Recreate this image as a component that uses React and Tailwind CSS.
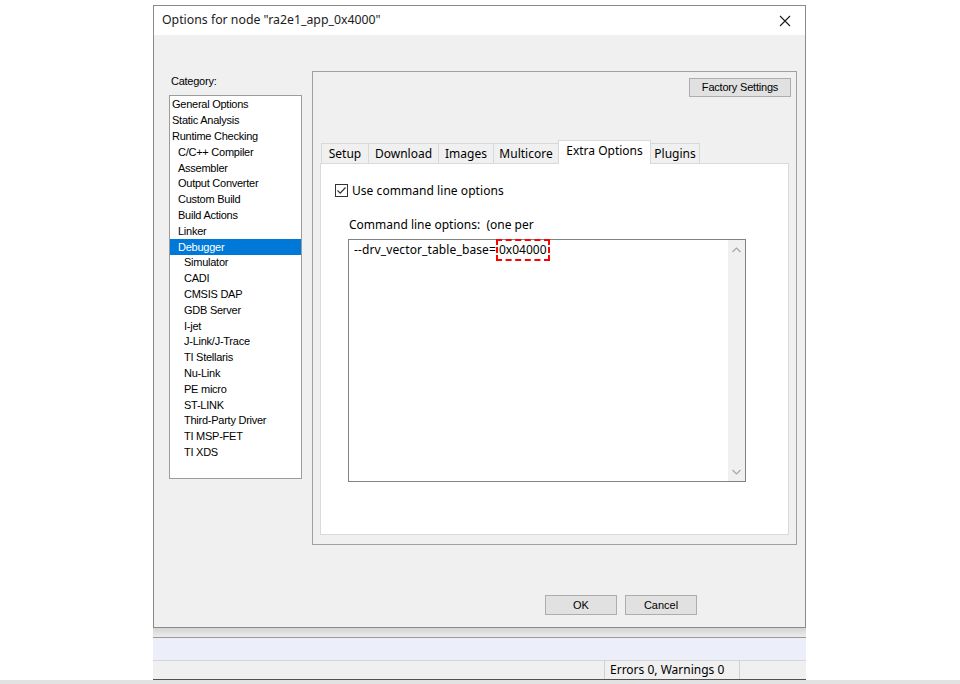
import React from "react";

const categories = [
  ["General Options", 0],
  ["Static Analysis", 0],
  ["Runtime Checking", 0],
  ["C/C++ Compiler", 1],
  ["Assembler", 1],
  ["Output Converter", 1],
  ["Custom Build", 1],
  ["Build Actions", 1],
  ["Linker", 1],
  ["Debugger", 1, true],
  ["Simulator", 2],
  ["CADI", 2],
  ["CMSIS DAP", 2],
  ["GDB Server", 2],
  ["I-jet", 2],
  ["J-Link/J-Trace", 2],
  ["TI Stellaris", 2],
  ["Nu-Link", 2],
  ["PE micro", 2],
  ["ST-LINK", 2],
  ["Third-Party Driver", 2],
  ["TI MSP-FET", 2],
  ["TI XDS", 2],
];

const tabs = [
  ["Setup", "w-[48px]"],
  ["Download", "w-[70px]"],
  ["Images", "w-[55px]"],
  ["Multicore", "w-[64px]"],
  ["Extra Options", "w-[93px]", true],
  ["Plugins", "w-[49px]"],
];

const ui = { fontFamily: '"Noto Sans", "Open Sans", sans-serif' };
const classic = { fontFamily: '"Liberation Sans", Arial, sans-serif' };

function CategoryItem({ label, level, selected }) {
  const indent = level === 0 ? "pl-[2px]" : level === 1 ? "pl-[8px]" : "pl-[14px]";
  return (
    <div
      className={`h-[15.8px] flex items-center text-[11px] tracking-[-0.25px] leading-none whitespace-nowrap ${indent} ${
        selected ? "bg-[#0078d7] text-white" : "text-black"
      }`}
    >
      {label}
    </div>
  );
}

function Chevron({ up }) {
  return (
    <svg width="9" height="6" viewBox="0 0 9 6" className="block">
      <path
        d={up ? "M0.5 5 L4.5 1 L8.5 5" : "M0.5 1 L4.5 5 L8.5 1"}
        fill="none"
        stroke="#a6a6a6"
        strokeWidth="1.2"
      />
    </svg>
  );
}

export default function App() {
  return (
    <div className="w-[960px] h-[684px] bg-white overflow-hidden flex flex-col">
      <div className="ml-[153px] mt-[5px] w-[653px] flex flex-col">
        {/* dialog window */}
        <div className="border border-[#8a8a8a] bg-white flex flex-col">
          <div className="h-[29px] flex items-center justify-between pl-[8px] pr-[10px]">
            <span className="text-[12.3px] text-[#1a1a1a]" style={ui}>
              Options for node "ra2e1_app_0x4000"
            </span>
            <svg width="12" height="12" viewBox="0 0 12 12" className="mr-[4px]">
              <path d="M1 1 L11 11 M11 1 L1 11" stroke="#1a1a1a" strokeWidth="1.1" />
            </svg>
          </div>
          <div className="h-[592px] bg-[#f0f0f0] flex flex-col">
            <div className="flex pl-[15px] pt-[36px]">
              {/* category list */}
              <div className="w-[133px] flex flex-col" style={classic}>
                <div className="mt-[3px] h-[14px] text-[11px] tracking-[-0.25px] leading-[14px] pl-[2px] text-black">Category:</div>
                <div className="mt-[7px] h-[384px] border border-[#9c9c9c] bg-white pt-[1px]">
                  {categories.map(([label, level, sel]) => (
                    <CategoryItem key={label} label={label} level={level} selected={sel} />
                  ))}
                </div>
              </div>

              {/* option pages */}
              <div className="ml-[10px] w-[485px] h-[474px] border border-[#a0a0a0] flex flex-col">
                <div className="flex justify-end mt-[6px] mr-[5px]">
                  <div
                    className="w-[102px] h-[19px] bg-[#e1e1e1] border border-[#adadad] flex items-center justify-center text-[11px] tracking-[-0.2px] text-black"
                    style={classic}
                  >
                    Factory Settings
                  </div>
                </div>

                <div className="ml-[7px] mt-[43px] flex flex-col" style={ui}>
                  <div className="h-[23px] flex items-end pl-[1px]">
                    {tabs.map(([label, w, sel], i) => (
                      <div
                        key={label}
                        className={`${w} flex items-center justify-center text-[12px] text-black border-[#d9d9d9] ${
                          sel
                            ? "h-[24px] bg-white border-l border-t border-r relative z-10 -mb-[1px] pb-[3px]"
                            : `h-[20px] bg-[#f0f0f0] border-t ${i === 0 ? "border-l" : ""} ${
                                tabs[i + 1] && tabs[i + 1][2] ? "" : "border-r"
                              }`
                        }`}
                      >
                        {label}
                      </div>
                    ))}
                  </div>
                  <div className="w-[469px] h-[372px] bg-white border border-[#d9d9d9] pl-[14px] pt-[20px] flex flex-col">
                    <div className="h-[13px] flex items-center">
                      <div className="w-[13px] h-[13px] border border-[#333333] bg-white flex items-center justify-center">
                        <svg width="11" height="11" viewBox="0 0 11 11">
                          <path d="M1.5 5.5 L4.2 8.2 L9.5 2.5" fill="none" stroke="#333333" strokeWidth="1.2" />
                        </svg>
                      </div>
                      <span className="ml-[4px] text-[12px] tracking-[0.05px] text-black leading-none">
                        Use command line options
                      </span>
                    </div>
                    <div className="ml-[14px] mt-[20px] h-[16px] text-[12px] leading-[16px] text-black whitespace-pre">
                      Command line options:  (one per
                    </div>
                    <div className="ml-[13px] mt-[6px] w-[398px] h-[243px] border border-[#828282] flex">
                      <div className="flex-1 pl-[5px]">
                        <div className="h-[20px] flex items-center text-[12px] text-black">
                          <span className="tracking-[0.12px]">--drv_vector_table_base=</span>
                          <span className="h-[22px] -my-[1px] px-[1px] border-2 border-dashed border-[#ff0000] flex items-center">
                            0x04000
                          </span>
                        </div>
                      </div>
                      <div className="w-[17px] bg-[#f0f0f0] flex flex-col items-center justify-between pt-[7px] pb-[6px]">
                        <Chevron up />
                        <Chevron />
                      </div>
                    </div>
                  </div>
                </div>
              </div>
            </div>

            {/* dialog buttons */}
            <div className="flex ml-[391px] mt-[50px] gap-[8px]" style={classic}>
              <div className="w-[72px] h-[20px] bg-[#e1e1e1] border border-[#adadad] flex items-center justify-center text-[11px] text-black">
                OK
              </div>
              <div className="w-[72px] h-[20px] bg-[#e1e1e1] border border-[#adadad] flex items-center justify-center text-[11px] text-black">
                Cancel
              </div>
            </div>
          </div>
        </div>

        {/* IDE window behind the dialog */}
        <div className="h-[9px] bg-gradient-to-b from-[#d4d4d4] to-[#ececec]" />
        <div className="h-[1px] bg-[#9a9a9a]" />
        <div className="h-[22px] bg-[#eceefa]" />
        <div className="h-[1px] bg-[#d6d6d6]" />
        <div className="h-[18px] bg-[#f0f0f0] flex" style={ui}>
          <div className="w-[452px] border-r border-[#d0d0d0]" />
          <div className="w-[135px] border-r border-[#d0d0d0] pl-[5px] flex items-center text-[12px] text-black leading-none">
            Errors 0, Warnings 0
          </div>
        </div>
        <div className="h-[1px] bg-[#505050]" />
      </div>
      <div className="flex-1 bg-[#e2e2e2]" />
    </div>
  );
}
